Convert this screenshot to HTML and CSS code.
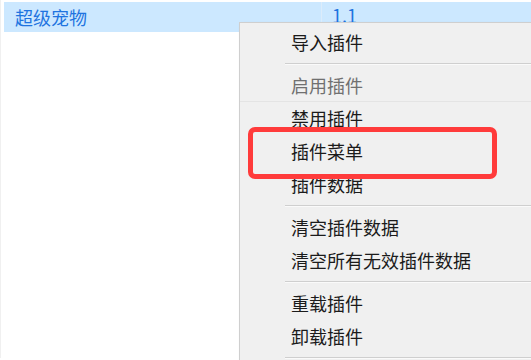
FILE: index.html
```html
<!DOCTYPE html>
<html lang="zh">
<head>
<meta charset="utf-8">
<link rel="stylesheet" href="styles.css">
</head>
<body>
<div class="table">
  <div class="row selected">
    <div class="cell name">超级宠物</div>
    <div class="cell ver">1.1</div>
  </div>
</div>
<div class="menu">
  <div class="item">导入插件</div>
  <div class="sep"></div>
  <div class="item disabled">启用插件</div>
  <div class="item">禁用插件</div>
  <div class="item">插件菜单</div>
  <div class="item">插件数据</div>
  <div class="sep"></div>
  <div class="item">清空插件数据</div>
  <div class="item">清空所有无效插件数据</div>
  <div class="sep"></div>
  <div class="item">重载插件</div>
  <div class="item">卸载插件</div>
  <div class="sep"></div>
</div>
<div class="highlight"></div>
</body>
</html>
```
FILE: styles.css
```css
html, body {
  margin: 0;
  padding: 0;
  background: #ffffff;
  width: 531px;
  height: 360px;
  overflow: hidden;
  font-family: "Noto Sans CJK SC", "Noto Sans", sans-serif;
}
.table {
  padding-top: 2px;
  padding-left: 3px;
  height: 358px;
  border-left: 1px solid #f0f0f0;
  box-sizing: border-box;
}
.row {
  display: flex;
  height: 30px;
  align-items: center;
}
.row.selected {
  background: #cce8ff;
}
.cell {
  font-size: 18px;
  color: #1f74e0;
  line-height: 30px;
}
.name {
  width: 318px;
  padding-left: 11px;
  box-sizing: border-box;
  border-right: 1px solid #dcecfb;
}
.ver {
  padding-left: 10px;
  position: relative;
  top: -2px;
}
.menu {
  position: absolute;
  left: 239px;
  right: 0;
  top: 22px;
  background: #f0f0f0;
  border: 1px solid #cfcfcf;
  border-right: none;
  padding-top: 3px;
  box-shadow: 2px 2px 3px rgba(0,0,0,0.15);
}
.item {
  height: 33px;
  line-height: 33px;
  padding-left: 51px;
  font-size: 18px;
  color: #1b1b1b;
}
.item.disabled {
  color: #707070;
  border-bottom: 1px solid #e4e4e4;
  height: 32px;
}
.sep {
  height: 10px;
  margin-left: 45px;
  position: relative;
}
.sep::after {
  content: "";
  position: absolute;
  left: 0;
  right: 0;
  top: 4px;
  height: 1px;
  background: #cfcfcf;
  border-bottom: 1px solid #fafafa;
}
.highlight {
  position: absolute;
  left: 248px;
  top: 127px;
  width: 249px;
  height: 52px;
  border: 5px solid #ff3b3b;
  border-radius: 7px;
  box-sizing: border-box;
}
```
